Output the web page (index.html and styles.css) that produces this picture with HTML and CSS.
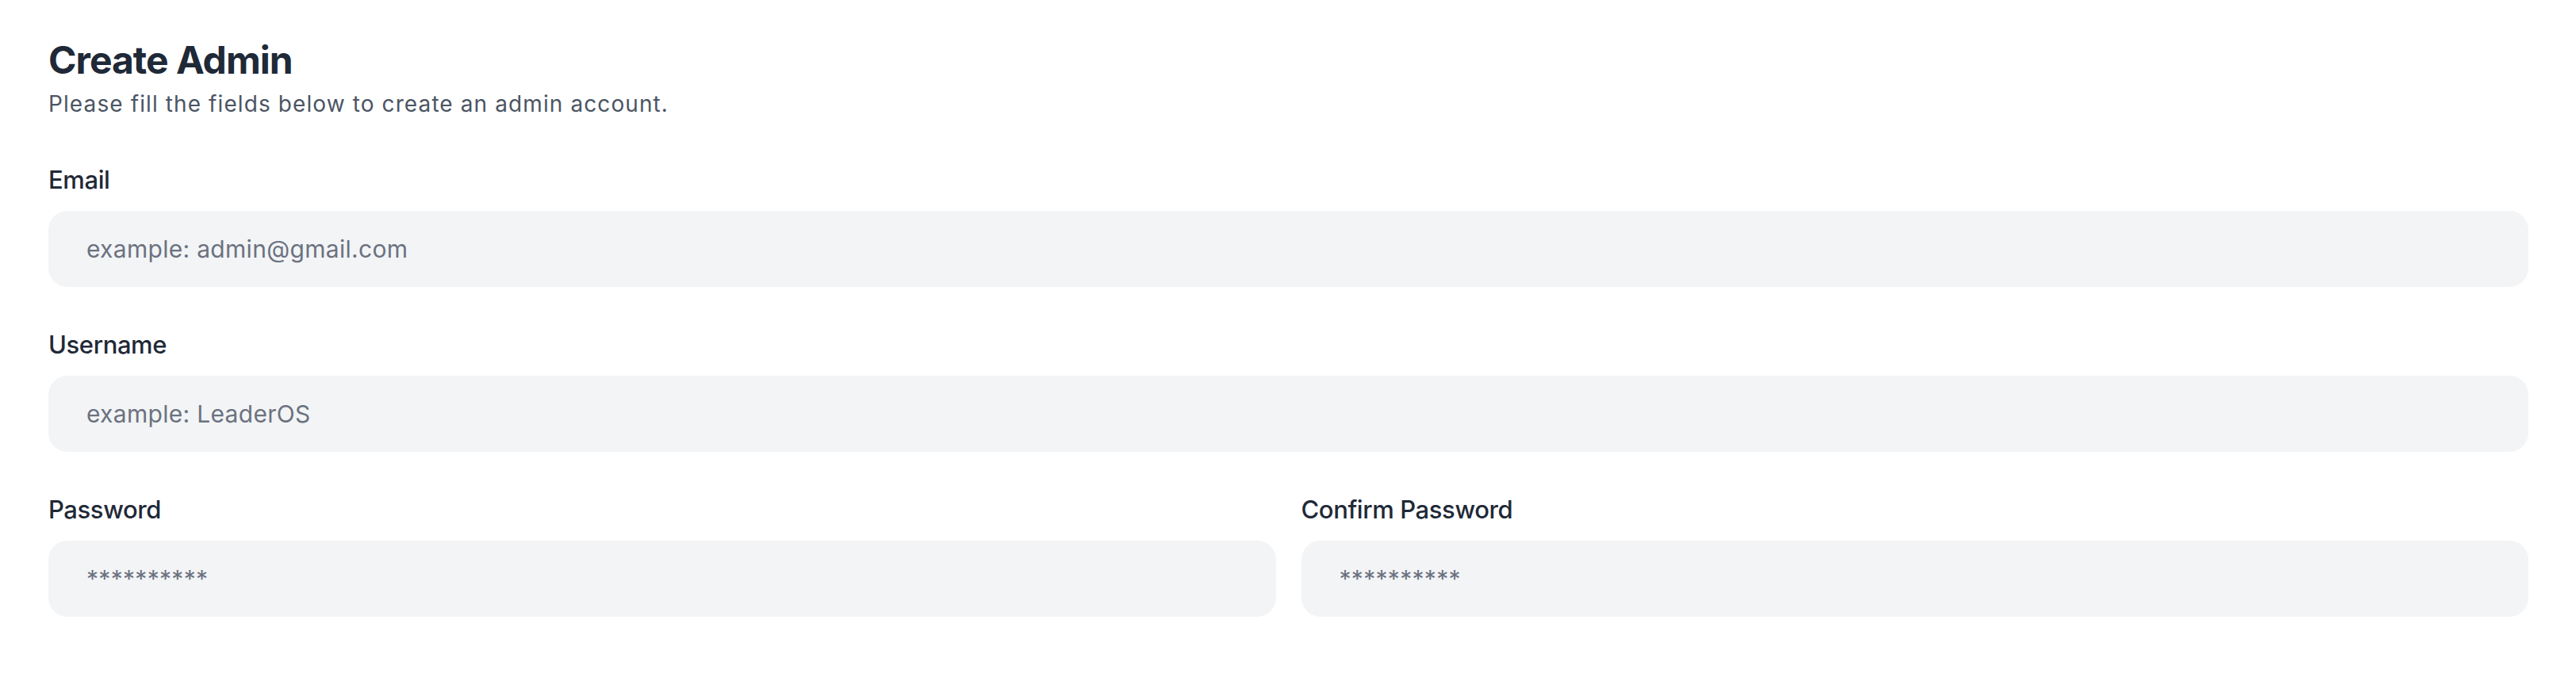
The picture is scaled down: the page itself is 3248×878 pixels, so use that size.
FILE: index.html
```html
<!DOCTYPE html>
<html lang="en">
<head>
<meta charset="utf-8">
<title>Create Admin</title>
<link rel="stylesheet" href="styles.css">
</head>
<body>
<main class="page">
  <header class="head">
    <h1 class="title">Create Admin</h1>
    <p class="subtitle">Please fill the fields below to create an admin account.</p>
  </header>
  <form class="form">
    <div class="field">
      <label class="label" for="email">Email</label>
      <input class="input" id="email" type="email" placeholder="example: admin@gmail.com">
    </div>
    <div class="field">
      <label class="label" for="username">Username</label>
      <input class="input" id="username" type="text" placeholder="example: LeaderOS">
    </div>
    <div class="row">
      <div class="field">
        <label class="label" for="password">Password</label>
        <input class="input" id="password" type="password" placeholder="**********">
      </div>
      <div class="field">
        <label class="label" for="confirm">Confirm Password</label>
        <input class="input" id="confirm" type="password" placeholder="**********">
      </div>
    </div>
  </form>
</main>
</body>
</html>
```
FILE: styles.css
```css
* { box-sizing: border-box; }
html, body { margin: 0; background: #ffffff; }
body { font-family: Inter, "Noto Sans", sans-serif; color: #1f2937; }
.page { padding: 40px 60px 0 61px; }
.head { margin-bottom: 56px; }
.title { margin: 0; font-size: 48px; line-height: 71px; font-weight: 700; letter-spacing: -1px; color: #1f2937; }
.subtitle { margin: 0; font-size: 28px; line-height: 40px; letter-spacing: 1.1px; color: #4b5563; }
.form { display: flex; flex-direction: column; gap: 53px; }
.row { display: grid; grid-template-columns: 1fr 1fr; column-gap: 32px; }
.field { display: flex; flex-direction: column; }
.label { font-size: 31px; line-height: 40px; font-weight: 500; letter-spacing: -0.4px; color: #1f2937; margin-bottom: 19px; }
.input {
  height: 96px; width: 100%;
  border: 0; outline: 0;
  border-radius: 24px;
  background: #f3f4f6;
  padding: 0 48px;
  font-family: Inter, "Noto Sans", sans-serif;
  font-size: 30px; letter-spacing: 0.3px; color: #1f2937;
}
.input::placeholder { color: #6b7280; opacity: 1; }
```
